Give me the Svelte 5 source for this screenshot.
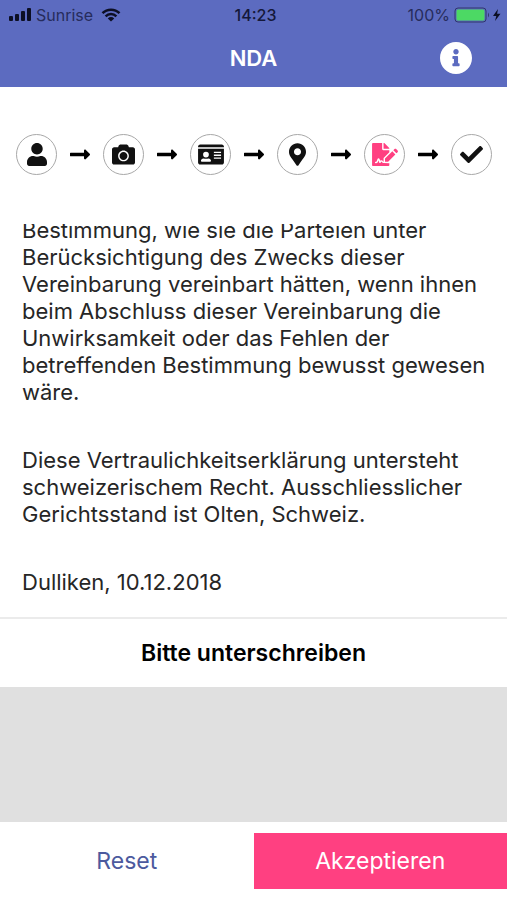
<script lang="ts">
  type Step = {
    label: string;
    width: number;
    viewBox: string;
    path: string;
    active?: boolean;
  };

  const steps: Step[] = [
    {
      label: "Person",
      width: 20,
      viewBox: "0 0 448 512",
      path: "M224 256c70.7 0 128-57.3 128-128S294.7 0 224 0 96 57.3 96 128s57.3 128 128 128zm89.6 32h-16.7c-22.2 10.2-46.9 16-72.9 16s-50.6-5.8-72.9-16h-16.7C60.2 288 0 348.2 0 422.4V464c0 26.5 21.5 48 48 48h352c26.5 0 48-21.5 48-48v-41.6c0-74.2-60.2-134.4-134.4-134.4z",
    },
    {
      label: "Foto",
      width: 23,
      viewBox: "0 0 512 512",
      path: "M512 144v288c0 26.5-21.5 48-48 48H48c-26.5 0-48-21.5-48-48V144c0-26.5 21.5-48 48-48h88l12.3-32.9c7-18.7 24.9-31.1 44.9-31.1h125.5c20 0 37.9 12.4 44.9 31.1L376 96h88c26.5 0 48 21.5 48 48zM376 288c0-66.2-53.8-120-120-120s-120 53.8-120 120 53.8 120 120 120 120-53.8 120-120zm-32 0c0 48.5-39.5 88-88 88s-88-39.5-88-88 39.5-88 88-88 88 39.5 88 88z",
    },
    {
      label: "Ausweis",
      width: 26,
      viewBox: "0 0 576 512",
      path: "M48 32h480c26.500 0 48 21.500 48 48v16H0V80c0-26.500 21.500-48 48-48zM0 128h576v304c0 26.500-21.500 48-48 48H48c-26.500 0-48-21.500-48-48zM176 192a64 64 0 1 0 0 128a64 64 0 1 0 0-128zM120 344c-32 0-56 22-56 52c0 12 8 20 20 20h184c12 0 20-8 20-20c0-30-24-52-56-52c-36 12-76 12-112 0zM352 192v32h160v-32zM352 256v32h160v-32zM352 320v32h160v-32z",
    },
    {
      label: "Standort",
      width: 17,
      viewBox: "0 0 384 512",
      path: "M172.268 501.67C26.97 291.031 0 269.413 0 192 0 85.961 85.961 0 192 0s192 85.961 192 192c0 77.413-26.97 99.031-172.268 309.67-9.535 13.774-29.93 13.773-39.464 0zM192 272c44.183 0 80-35.817 80-80s-35.817-80-80-80-80 35.817-80 80 35.817 80 80 80z",
    },
    {
      label: "Unterschrift",
      width: 26,
      viewBox: "0 0 576 512",
      path: "M218.17 424.14c-2.95-5.92-8.09-6.52-10.17-6.52s-7.22.59-10.02 6.19l-7.67 15.34c-6.37 12.78-25.03 11.37-29.48-2.09L144 386.59l-10.61 31.88c-5.89 17.66-22.38 29.53-41 29.53H80c-8.84 0-16-7.16-16-16s7.16-16 16-16h12.39c4.83 0 9.11-3.08 10.64-7.66l18.19-54.64c3.3-9.81 12.44-16.41 22.78-16.41s19.48 6.59 22.77 16.41l13.88 41.64c19.75-16.19 54.06-9.7 66 14.16 1.89 3.78 5.49 5.95 9.36 6.26v-82.12l128-127.09V160H248c-13.2 0-24-10.8-24-24V0H24C10.7 0 0 10.7 0 24v464c0 13.3 10.7 24 24 24h336c13.3 0 24-10.7 24-24v-40l-128-.11c-16.12-.31-30.58-9.28-37.83-23.75zM384 121.9c0-6.3-2.5-12.4-7-16.9L279.1 7c-4.5-4.5-10.6-7-17-7H256v128h128v-6.1zm-96 225.06V416h68.99l161.68-162.78-67.88-67.88L288 346.96zm280.54-179.63l-31.87-31.87c-9.94-9.94-26.07-9.94-36.01 0l-27.25 27.25 67.88 67.88 27.25-27.25c9.95-9.94 9.95-26.07 0-36.01z",
      active: true,
    },
    {
      label: "Fertig",
      width: 23,
      viewBox: "0 0 512 512",
      path: "M173.898 439.404l-166.4-166.4c-9.997-9.997-9.997-26.206 0-36.204l36.203-36.204c9.997-9.998 26.207-9.998 36.204 0L192 312.69 432.095 72.596c9.997-9.997 26.207-9.997 36.204 0l36.203 36.204c9.997 9.997 9.997 26.206 0 36.204l-294.4 294.401c-9.998 9.997-26.207 9.997-36.204-.001z",
    },
  ];

  const paragraphs = [
    "Bestimmung, wie sie die Parteien unter Berücksichtigung des Zwecks dieser Vereinbarung vereinbart hätten, wenn ihnen beim Abschluss dieser Vereinbarung die Unwirksamkeit oder das Fehlen der betreffenden Bestimmung bewusst gewesen wäre.",
    "Diese Vertraulichkeitserklärung untersteht schweizerischem Recht. Ausschliesslicher Gerichtsstand ist Olten, Schweiz.",
    "Dulliken, 10.12.2018",
  ];

  let pad = $state<HTMLCanvasElement | undefined>();
  let padWidth = $state(0);
  let padHeight = $state(0);
  let drawing = false;

  function startStroke(e: PointerEvent) {
    const ctx = pad?.getContext("2d");
    if (!ctx) return;
    drawing = true;
    ctx.lineWidth = 2;
    ctx.beginPath();
    ctx.moveTo(e.offsetX, e.offsetY);
  }

  function moveStroke(e: PointerEvent) {
    const ctx = pad?.getContext("2d");
    if (!ctx || !drawing) return;
    ctx.lineTo(e.offsetX, e.offsetY);
    ctx.stroke();
  }

  function endStroke() {
    drawing = false;
  }

  function reset() {
    pad?.getContext("2d")?.clearRect(0, 0, padWidth, padHeight);
  }
</script>

<div class="app">
  <header>
    <div class="status">
      <div class="carrier">
        <svg width="23" height="13" viewBox="0 0 23 13" aria-hidden="true">
          <rect x="0" y="8" width="4" height="5" rx="1" />
          <rect x="6" y="6" width="4" height="7" rx="1" />
          <rect x="12" y="3" width="4" height="10" rx="1" />
          <rect x="18" y="0" width="4" height="13" rx="1" />
        </svg>
        <span>Sunrise</span>
        <svg class="wifi" width="20" height="14" viewBox="0 0 20 14" aria-hidden="true">
          <path d="M1.500 5.200a12 12 0 0 1 17 0M4.600 8.300a7.600 7.600 0 0 1 10.800 0" />
          <path class="dot" d="M10 13.500L6.800 10.400a4.600 4.600 0 0 1 6.400 0z" />
        </svg>
      </div>
      <span class="time">14:23</span>
      <div class="battery">
        <span>100%</span>
        <svg width="48" height="16" viewBox="0 0 48 16" aria-hidden="true">
          <rect x="1" y="1" width="31" height="14" rx="3" fill="none" stroke="#30376b" stroke-width="1" />
          <rect x="2.500" y="2.500" width="28" height="11" rx="1.500" fill="#4cd964" />
          <path d="M34 5.500q2 2.500 0 5z" fill="#30376b" />
          <path d="M44 2l-5 7h3.300L41 14l5.500-7.300h-3.400z" />
        </svg>
      </div>
    </div>
    <div class="titlebar">
      <h1>NDA</h1>
      <button class="info" aria-label="Info">
        <svg width="32" height="32" viewBox="8 8 496 496" aria-hidden="true">
          <path d="M256 8C119.043 8 8 119.083 8 256c0 136.997 111.043 248 248 248s248-111.003 248-248C504 119.083 392.957 8 256 8zm0 110c23.196 0 42 18.804 42 42s-18.804 42-42 42-42-18.804-42-42 18.804-42 42-42zm56 254c0 6.627-5.373 12-12 12h-88c-6.627 0-12-5.373-12-12v-24c0-6.627 5.373-12 12-12h12v-64h-12c-6.627 0-12-5.373-12-12v-24c0-6.627 5.373-12 12-12h64c6.627 0 12 5.373 12 12v100h12c6.627 0 12 5.373 12 12v24z" />
        </svg>
      </button>
    </div>
  </header>

  <div class="steps">
    {#each steps as step, i}
      {#if i > 0}
        <svg class="arrow" width="20" height="23" viewBox="0 0 448 512" aria-hidden="true">
          <path d="M313.941 216H12c-6.627 0-12 5.373-12 12v56c0 6.627 5.373 12 12 12h301.941v46.059c0 21.382 25.851 32.09 40.971 16.971l86.059-86.059c9.373-9.373 9.373-24.569 0-33.941l-86.059-86.059c-15.119-15.119-40.971-4.411-40.971 16.971V216z" />
        </svg>
      {/if}
      <div class="step" class:active={step.active} role="img" aria-label={step.label}>
        <svg width={step.width} height="23" viewBox={step.viewBox}>
          <path d={step.path} fill-rule="evenodd" />
        </svg>
      </div>
    {/each}
  </div>

  <!-- column-reverse keeps the contract scrolled to its end -->
  <main>
    <div class="contract">
      {#each paragraphs as text}
        <p>{text}</p>
      {/each}
    </div>
  </main>

  <section class="signature">
    <h2>Bitte unterschreiben</h2>
    <div class="pad" bind:clientWidth={padWidth} bind:clientHeight={padHeight}>
      <canvas
        bind:this={pad}
        width={padWidth}
        height={padHeight}
        aria-label="Unterschrift"
        onpointerdown={startStroke}
        onpointermove={moveStroke}
        onpointerup={endStroke}
        onpointerleave={endStroke}
      ></canvas>
    </div>
  </section>

  <footer>
    <button class="reset" onclick={reset}>Reset</button>
    <button class="accept">Akzeptieren</button>
  </footer>
</div>

<style>
  :global(body) {
    margin: 0;
    background: #fff;
  }

  .app {
    display: flex;
    flex-direction: column;
    height: 100vh;
    font-family: Inter, "Liberation Sans", sans-serif;
    color: #262626;
  }

  header {
    flex: none;
    background: #5c6bc0;
  }

  .status {
    display: grid;
    grid-template-columns: 1fr auto 1fr;
    align-items: center;
    height: 29px;
    padding: 0 5px 0 9px;
    font-size: 16px;
    color: #262c5c;
  }

  .status svg {
    display: block;
    fill: #0c0f24;
  }

  .carrier,
  .battery {
    display: flex;
    align-items: center;
    gap: 4px;
  }

  .carrier .wifi {
    margin-left: 4px;
    fill: none;
    stroke: #0c0f24;
    stroke-width: 2.5;
  }

  .wifi .dot {
    fill: #0c0f24;
    stroke: none;
  }

  .battery {
    justify-content: flex-end;
  }

  .time {
    font-weight: 500;
    color: #14183a;
  }

  .titlebar {
    display: grid;
    grid-template-columns: 1fr auto 1fr;
    align-items: center;
    height: 58px;
    padding: 0 35px;
  }

  h1 {
    grid-column: 2;
    margin: 0;
    font-size: 22px;
    font-weight: 600;
    color: #fff;
  }

  .info {
    justify-self: end;
    padding: 0;
    border: none;
    background: none;
    cursor: pointer;
  }

  .info svg {
    display: block;
    fill: #fff;
  }

  .steps {
    flex: none;
    display: flex;
    align-items: center;
    justify-content: space-between;
    padding: 47px 15px 49px 16px;
  }

  .step {
    display: flex;
    align-items: center;
    justify-content: center;
    box-sizing: border-box;
    width: 41px;
    height: 41px;
    border: 1px solid #a8a8a8;
    border-radius: 50%;
    fill: #111;
  }

  .step.active {
    fill: #ff4081;
  }

  .arrow {
    fill: #000;
  }

  main {
    flex: 1;
    min-height: 0;
    display: flex;
    flex-direction: column-reverse;
    overflow-y: auto;
    scrollbar-width: none;
  }

  .contract {
    padding: 0 16px 21px 22px;
    font-size: 22px;
    line-height: 27px;
  }

  p {
    margin: 0 0 41px;
  }

  p:last-child {
    margin-bottom: 0;
  }

  .signature {
    flex: none;
    border-top: 2px solid #ebebeb;
  }

  h2 {
    margin: 0;
    padding: 20px 0;
    font-size: 23px;
    line-height: 28px;
    font-weight: 600;
    text-align: center;
    color: #000;
  }

  .pad {
    height: 135px;
    background: #e0e0e0;
  }

  canvas {
    display: block;
    touch-action: none;
  }

  footer {
    flex: none;
    display: grid;
    grid-template-columns: 1fr 1fr;
    padding: 11px 0;
  }

  footer button {
    height: 56px;
    border: none;
    font-family: inherit;
    font-size: 23px;
    cursor: pointer;
  }

  .reset {
    background: none;
    color: #4c5a9e;
  }

  .accept {
    background: #ff4081;
    color: #fff;
  }
</style>
